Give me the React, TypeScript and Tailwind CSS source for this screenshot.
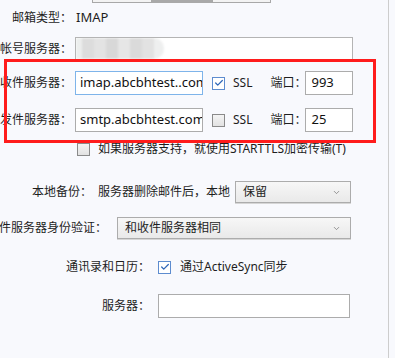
import { Check, ChevronDown } from 'lucide-react'

const font = "font-['Noto_Sans','Noto_Sans_CJK_SC',sans-serif]"

function Box({ checked = false }: { checked?: boolean }) {
  return (
    <span
      className={
        checked
          ? 'flex h-[13px] w-[13px] shrink-0 items-center justify-center border border-[#5d8ccf] bg-white'
          : 'flex h-[13px] w-[13px] shrink-0 items-center justify-center border border-[#8a8a8a] bg-gradient-to-b from-[#f4f4f4] to-[#e2e2e2]'
      }
    >
      {checked && <Check size={10} strokeWidth={3} className="text-[#2f67b8]" />}
    </span>
  )
}

function Label({ w, children }: { w: string; children: React.ReactNode }) {
  return (
    <div className={`flex shrink-0 justify-end whitespace-nowrap text-[12px] text-[#1e1e1e] ${w}`}>
      {children}
    </div>
  )
}

function Select({ value, w }: { value: string; w: string }) {
  return (
    <div
      className={`flex h-[22px] items-center justify-between border border-[#acacac] bg-gradient-to-b from-[#f7f7f7] to-[#e9e9e9] pl-[7px] pr-[9px] text-[12px] text-[#1e1e1e] shadow-[0_1px_0_#d6d6d6] ${w}`}
    >
      <span>{value}</span>
      <ChevronDown size={9} strokeWidth={2} className="text-[#777]" />
    </div>
  )
}

function ServerRow({ label, host, ssl, port }: { label: string; host: string; ssl: boolean; port: string }) {
  return (
    <div className="flex h-[24px] items-center">
      <Label w="w-[72px]">{label}</Label>
      <div
        className={
          ssl
            ? 'ml-[3px] flex h-[24px] w-[128px] items-center overflow-hidden whitespace-nowrap border border-[#7eb4ea] bg-white pl-[4px] text-[13px] text-[#111]'
            : 'ml-[3px] flex h-[24px] w-[128px] items-center overflow-hidden whitespace-nowrap border border-[#acacac] bg-white pl-[4px] text-[13px] text-[#111]'
        }
      >
        {host}
      </div>
      <div className="ml-[9px]">
        <Box checked={ssl} />
      </div>
      <span className="ml-[8px] text-[12px] text-[#1e1e1e]">SSL</span>
      <span className="ml-[18px] text-[12px] text-[#1e1e1e]">端口：</span>
      <div className="ml-[-1px] flex h-[24px] w-[48px] items-center border border-[#acacac] bg-white pl-[5px] text-[13px] text-[#111]">
        {port}
      </div>
    </div>
  )
}

export default function App() {
  return (
    <div className={`relative h-[358px] w-[395px] overflow-hidden bg-[#f8f9fd] ${font}`}>
      <div className="flex h-full w-[389px] flex-col border-r border-[#cdcdcd]">
        {/* tab strip cut off at the top */}
        <div className="ml-[92px] flex h-[3px]">
          <div className="w-[60px] border-x border-b border-[#a8a8a8] bg-[#f3f3f3]" />
          <div className="w-[60px] bg-[#a9a9a9]" />
          <div className="w-[59px] border-x border-b border-[#a8a8a8] bg-[#f3f3f3]" />
        </div>

        <div className="mt-[3px] flex h-[24px] items-center">
          <Label w="w-[72px]">邮箱类型：</Label>
          <span className="ml-[4px] text-[13px] text-[#1e1e1e]">IMAP</span>
        </div>

        <div className="mt-[7px] flex h-[23px] items-center">
          <Label w="w-[72px]">帐号服务器：</Label>
          <div className="ml-[3px] flex h-[23px] w-[278px] overflow-hidden border border-[#b4b4b4] bg-white">
            <div className="flex h-full w-[88px] blur-[1px]">
              <div className="w-[6px] bg-[#eceeed]" />
              <div className="w-[12px] bg-[#dcdcdc]" />
              <div className="w-[12px] bg-[#e3e3e3]" />
              <div className="w-[12px] bg-[#d8d8d8]" />
              <div className="w-[12px] bg-[#e6e6e6]" />
              <div className="w-[12px] bg-[#dadada]" />
              <div className="w-[12px] bg-[#e2e2e2]" />
              <div className="w-[10px] rounded-r-full bg-[#eeefef]" />
            </div>
          </div>
        </div>

        <div className="mt-[11px]">
          <ServerRow label="收件服务器：" host="imap.abcbhtest..com" ssl port="993" />
        </div>
        <div className="mt-[13px]">
          <ServerRow label="发件服务器：" host="smtp.abcbhtest.com" ssl={false} port="25" />
        </div>

        <div className="ml-[77px] mt-[10px] flex h-[14px] items-center gap-[8px] whitespace-nowrap text-[12px] text-[#1e1e1e]">
          <Box />
          <span>如果服务器支持，就使用STARTTLS加密传输(T)</span>
        </div>

        <div className="mt-[25px] flex h-[22px] items-center">
          <Label w="w-[92px]">本地备份：</Label>
          <span className="ml-[6px] whitespace-nowrap text-[12px] text-[#1e1e1e]">服务器删除邮件后，本地</span>
          <div className="ml-[5px]">
            <Select value="保留" w="w-[116px]" />
          </div>
        </div>

        <div className="mt-[14px] flex h-[22px] items-center">
          <Label w="w-[107px]">发件服务器身份验证：</Label>
          <div className="ml-[10px]">
            <Select value="和收件服务器相同" w="w-[234px]" />
          </div>
        </div>

        <div className="mt-[20px] flex h-[16px] items-center">
          <Label w="w-[150px]">通讯录和日历：</Label>
          <div className="ml-[8px]">
            <Box checked />
          </div>
          <span className="ml-[9px] whitespace-nowrap text-[12px] text-[#1e1e1e]">通过ActiveSync同步</span>
        </div>

        <div className="mt-[19px] flex h-[24px] items-center">
          <Label w="w-[150px]">服务器：</Label>
          <div className="ml-[8px] h-[24px] w-[192px] border border-[#acacac] bg-white" />
        </div>
      </div>

      {/* red annotation frame */}
      <div className="pointer-events-none absolute left-[4px] top-[59px] h-[84px] w-[372px] border-[3px] border-[#ff1c1c]" />
    </div>
  )
}
